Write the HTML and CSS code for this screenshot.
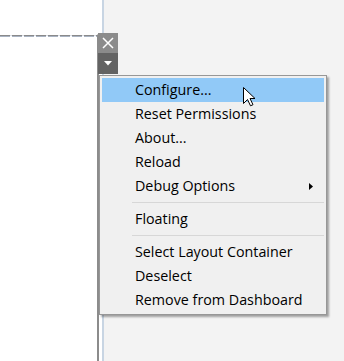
FILE: index.html
```html
<!DOCTYPE html>
<html lang="en">
<head>
  <meta charset="UTF-8" />
  <meta name="viewport" content="width=device-width, initial-scale=1.0"/>
  <title>Dashboard zone menu</title>
  <link rel="stylesheet" href="styles.css">
</head>
<body>
  <div class="canvas">
    <div class="sheet">
      <div class="zone"></div>
    </div>
    <div class="divider"></div>
    <div class="pane"></div>

    <!-- zone controls sit over the selected zone -->
    <div class="zone-controls">
      <button class="ctl ctl-close" title="Remove">
        <svg width="12" height="12" viewBox="0 0 12 12">
          <path d="M1 1 L11 11 M11 1 L1 11" stroke="#fff" stroke-width="1.5" fill="none"/>
        </svg>
      </button>
      <button class="ctl ctl-more" title="More options">
        <svg width="8" height="5" viewBox="0 0 8 5">
          <path d="M0 0 H8 L4 4.5 Z" fill="#fff"/>
        </svg>
      </button>
    </div>

    <ul class="menu">
      <li class="item active">Configure...</li>
      <li class="item">Reset Permissions</li>
      <li class="item">About...</li>
      <li class="item">Reload</li>
      <li class="item has-sub">Debug Options
        <svg class="sub-arrow" width="4" height="7" viewBox="0 0 4 7">
          <path d="M0 0 L4 3.5 L0 7 Z" fill="#000"/>
        </svg>
      </li>
      <li class="sep"></li>
      <li class="item">Floating</li>
      <li class="sep"></li>
      <li class="item">Select Layout Container</li>
      <li class="item">Deselect</li>
      <li class="item">Remove from Dashboard</li>
    </ul>

    <svg class="cursor" width="13" height="20" viewBox="0 0 13 20">
      <path d="M0.5 0.5 L0.5 16.5 L4.5 12.5 L7.5 18.8 L10 17.7 L7 11.5 L12 11.5 Z"
            fill="#fff" stroke="#000" stroke-width="1" stroke-linejoin="miter"/>
    </svg>
  </div>
</body>
</html>
```

FILE: styles.css
```css
:root {
  --menu-bg: #f0f0f0;
  --menu-border: #979797;
  --highlight: #91c9f7;
  --sep: #d7d7d7;
  --pane: #f3f3f3;
  --rule: #c8d5e3;
}

* {
  box-sizing: border-box;
}

body {
  margin: 0;
  font-family: "Open Sans", "Noto Sans", sans-serif;
  background: var(--pane);
}

.canvas {
  position: relative;
  display: flex;
  width: 344px;
  height: 361px;
  overflow: hidden;
}

.sheet {
  width: 102px;
  background: #fff;
  display: flex;
  flex-direction: column;
}

/* selected zone: dashed top edge, solid right edge */
.zone {
  flex: 1;
  margin-top: 33px;
  width: 99px;
  border-right: 2px solid #8c8c8c;
  border-top: 2px solid transparent;
  background:
    repeating-linear-gradient(90deg, #8a8a8a 0 10px, #d9dee6 10px 12px) 0 0 / 100% 1px no-repeat,
    repeating-linear-gradient(90deg, #a9b3c2 0 10px, #ffffff 10px 12px) 0 1px / 100% 1px no-repeat,
    #fff;
}

.divider {
  width: 2px;
  background: var(--rule);
}

.pane {
  flex: 1;
  background: var(--pane);
}

.zone-controls {
  position: absolute;
  left: 98px;
  top: 33px;
  display: flex;
  flex-direction: column;
}

.ctl {
  width: 20px;
  height: 20px;
  padding: 0;
  border: none;
  display: flex;
  align-items: center;
  justify-content: center;
}

.ctl-close {
  background: #8b8b8b;
}

.ctl-more {
  height: 21px;
  background: #636363;
}

.menu {
  position: absolute;
  left: 99px;
  top: 75px;
  width: 228px;
  margin: 0;
  padding: 2px;
  list-style: none;
  background: var(--menu-bg);
  border: 1px solid var(--menu-border);
  box-shadow: 2px 2px 2px rgba(0, 0, 0, 0.35);
  font-size: 14.3px;
  color: #000;
}

.item {
  position: relative;
  height: 24px;
  line-height: 24px;
  padding-left: 33px;
  white-space: nowrap;
}

.item.active {
  background: var(--highlight);
}

.sub-arrow {
  position: absolute;
  right: 11px;
  top: 9px;
}

.sep {
  height: 9px;
  margin-left: 30px;
  background: linear-gradient(var(--sep), var(--sep)) 0 4px / 100% 1px no-repeat;
}

.cursor {
  position: absolute;
  left: 243px;
  top: 87px;
}
```
